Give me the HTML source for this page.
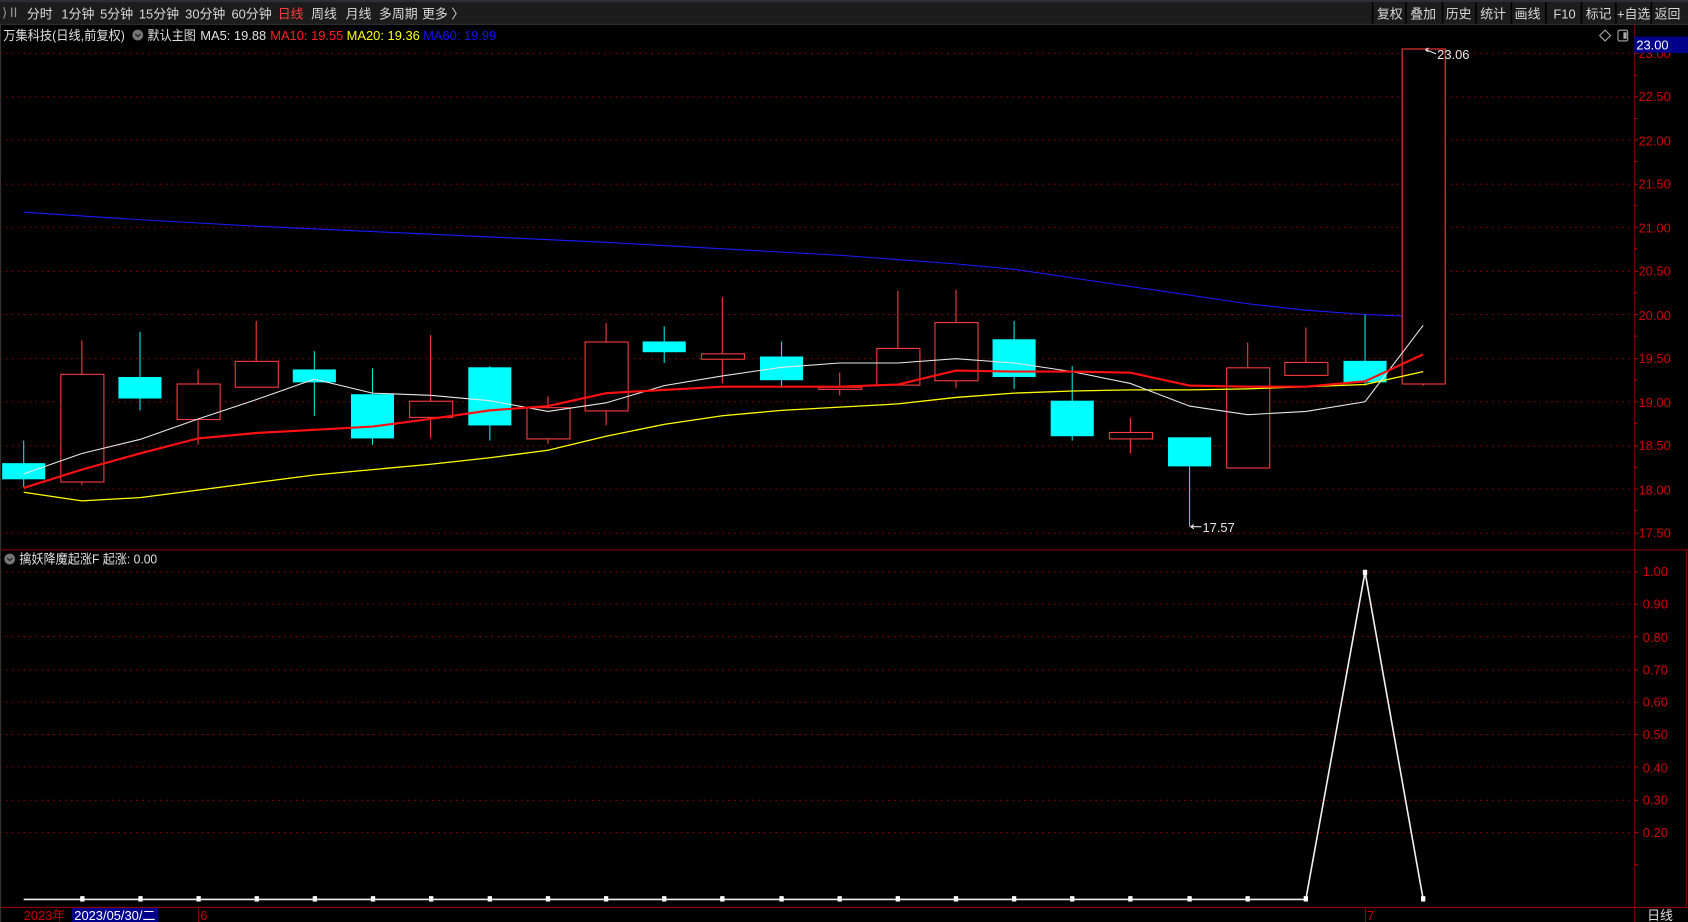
<!DOCTYPE html>
<html><head><meta charset="utf-8"><style>
html,body{margin:0;padding:0;background:#000;width:1688px;height:922px;overflow:hidden}
svg{display:block}
text{font-family:"Liberation Sans","Noto Sans CJK SC",sans-serif;font-size:12px}
</style></head><body>
<svg width="1688" height="922" viewBox="0 0 1568 856" preserveAspectRatio="none" xmlns="http://www.w3.org/2000/svg">
<rect width="1568" height="856" fill="#000"/>
<rect x="0" y="0" width="1568" height="22" fill="#1c1c1c"/>
<rect x="0" y="0" width="1568" height="2" fill="#2a2e36"/>
<line x1="0" y1="22.5" x2="1568" y2="22.5" stroke="#3a3a3a"/>
<g fill="#d8d8d8">
<text x="2" y="16" fill="#999" font-size="10">⟩Ⅱ</text>
<text x="25" y="17">分时</text><text x="57" y="17">1分钟</text><text x="93" y="17">5分钟</text>
<text x="129" y="17">15分钟</text><text x="172" y="17">30分钟</text><text x="215" y="17">60分钟</text>
<text x="258" y="17" fill="#ff3c3c">日线</text><text x="289" y="17">周线</text><text x="321" y="17">月线</text>
<text x="352" y="17">多周期</text><text x="392" y="17">更多 〉</text>
</g>
<g stroke="#000" stroke-width="1.5">
<line x1="1275" y1="2" x2="1275" y2="22"/><line x1="1306" y1="2" x2="1306" y2="22"/><line x1="1340" y1="2" x2="1340" y2="22"/>
<line x1="1371" y1="2" x2="1371" y2="22"/><line x1="1404" y1="2" x2="1404" y2="22"/><line x1="1436" y1="2" x2="1436" y2="22"/>
<line x1="1469" y1="2" x2="1469" y2="22"/><line x1="1501" y1="2" x2="1501" y2="22"/><line x1="1534" y1="2" x2="1534" y2="22"/>
</g>
<g fill="#d8d8d8">
<text x="1279" y="17">复权</text><text x="1310" y="17">叠加</text><text x="1343" y="17">历史</text><text x="1375" y="17">统计</text>
<text x="1407" y="17">画线</text><text x="1443" y="17">F10</text><text x="1473" y="17">标记</text><text x="1502" y="17">+自选</text><text x="1537" y="17">返回</text>
</g>
<text x="3" y="37" fill="#e0e0e0" textLength="113" lengthAdjust="spacingAndGlyphs">万集科技(日线,前复权)</text>
<circle cx="128" cy="32.5" r="5" fill="#777"/><path d="M125.5 31.5 L128 34 L130.5 31.5" stroke="#222" fill="none" stroke-width="1.2"/>
<text x="137" y="37" fill="#e0e0e0" textLength="45" lengthAdjust="spacingAndGlyphs">默认主图</text>
<text x="186" y="37" fill="#e0e0e0">MA5: 19.88</text>
<text x="251" y="37" fill="#ff2020">MA10: 19.55</text>
<text x="322" y="37" fill="#ffff00">MA20: 19.36</text>
<text x="393" y="37" fill="#1010ff">MA60: 19.99</text>
<path d="M1491 28 L1496 33 L1491 38 L1486 33 Z" stroke="#aaa" fill="none"/>
<rect x="1503" y="28" width="9" height="10" rx="1.5" stroke="#aaa" fill="none"/><rect x="1508" y="30" width="3" height="6" fill="#aaa"/>
<g stroke="#8a0000" stroke-dasharray="1.5,4" stroke-width="1">
<line x1="0" y1="49.5" x2="1518" y2="49.5"/><line x1="0" y1="90" x2="1518" y2="90"/><line x1="0" y1="130" x2="1518" y2="130"/>
<line x1="0" y1="171" x2="1518" y2="171"/><line x1="0" y1="211" x2="1518" y2="211"/><line x1="0" y1="252" x2="1518" y2="252"/>
<line x1="0" y1="292" x2="1518" y2="292"/><line x1="0" y1="333" x2="1518" y2="333"/><line x1="0" y1="373" x2="1518" y2="373"/>
<line x1="0" y1="414" x2="1518" y2="414"/><line x1="0" y1="454" x2="1518" y2="454"/><line x1="0" y1="495" x2="1518" y2="495"/>
<line x1="0" y1="531" x2="1518" y2="531"/><line x1="0" y1="561" x2="1518" y2="561"/><line x1="0" y1="591" x2="1518" y2="591"/>
<line x1="0" y1="622" x2="1518" y2="622"/><line x1="0" y1="652" x2="1518" y2="652"/><line x1="0" y1="682" x2="1518" y2="682"/>
<line x1="0" y1="712" x2="1518" y2="712"/><line x1="0" y1="743" x2="1518" y2="743"/><line x1="0" y1="773" x2="1518" y2="773"/>
</g>
<g stroke="#900000" stroke-width="1">
<line x1="1518.5" y1="23" x2="1518.5" y2="856"/>
<line x1="0" y1="510.5" x2="1568" y2="510.5"/>
<line x1="0" y1="842.5" x2="1568" y2="842.5"/>
<line x1="1566.5" y1="510" x2="1566.5" y2="842"/>
</g>
<line x1="0.5" y1="23" x2="0.5" y2="856" stroke="#333"/>
<g fill="#d00000" font-size="12">
<text x="1522" y="94">22.50</text><text x="1522" y="135">22.00</text><text x="1522" y="175">21.50</text>
<text x="1522" y="216">21.00</text><text x="1522" y="256">20.50</text><text x="1522" y="297">20.00</text>
<text x="1522" y="337">19.50</text><text x="1522" y="378">19.00</text><text x="1522" y="418">18.50</text>
<text x="1522" y="459">18.00</text><text x="1522" y="499">17.50</text>
<text x="1526" y="535">1.00</text><text x="1526" y="565">0.90</text><text x="1526" y="596">0.80</text>
<text x="1526" y="626">0.70</text><text x="1526" y="656">0.60</text><text x="1526" y="686">0.50</text>
<text x="1526" y="717">0.40</text><text x="1526" y="747">0.30</text><text x="1526" y="777">0.20</text>
</g>
<g stroke="#b00000">
<path d="M1518 49.5h4M1518 70h3M1518 90h4M1518 110h3M1518 130h4M1518 150h3M1518 171h4M1518 191h3M1518 211h4M1518 231h3M1518 252h4M1518 272h3M1518 292h4M1518 312h3M1518 333h4M1518 353h3M1518 373h4M1518 393h3M1518 414h4M1518 434h3M1518 454h4M1518 474h3M1518 495h4"/>
<path d="M1518 531h4M1518 561h4M1518 591h4M1518 622h4M1518 652h4M1518 682h4M1518 712h4M1518 743h4M1518 773h4M1518 803h4"/>
</g>
<text x="1522" y="54" fill="#d00000">23.00</text>
<rect x="1518" y="34" width="50" height="15" fill="#00008b"/>
<text x="1520" y="46" fill="#fff">23.00</text>
<polyline fill="none" stroke="#1a1aff" stroke-width="1" points="22,197 130,204 238,210 346,215 455,220 563,225 671,231 780,237 888,245 942,250 996,258 1050,266 1105,274 1159,282 1213,288 1268,292 1322,294"/>
<g stroke="#ff3c3c" fill="#000" stroke-width="1">
<line x1="76" y1="316" x2="76" y2="450"/><rect x="56.5" y="347.5" width="40" height="100"/>
<line x1="184" y1="343" x2="184" y2="413"/><rect x="164.5" y="356.5" width="40" height="33"/>
<line x1="238" y1="298" x2="238" y2="359"/><rect x="218.5" y="335.5" width="40" height="24"/>
<line x1="400" y1="311" x2="400" y2="407"/><rect x="380.5" y="372.5" width="40" height="15"/>
<line x1="509" y1="368" x2="509" y2="412"/><rect x="489.5" y="378.5" width="40" height="29"/>
<line x1="563" y1="300" x2="563" y2="395"/><rect x="543.5" y="317.5" width="40" height="64"/>
<line x1="671" y1="276" x2="671" y2="356"/><rect x="651.5" y="328.5" width="40" height="5"/>
<line x1="780" y1="346" x2="780" y2="367"/><rect x="760.5" y="359.5" width="40" height="2"/>
<line x1="834" y1="270" x2="834" y2="357"/><rect x="814.5" y="323.5" width="40" height="34"/>
<line x1="888" y1="269" x2="888" y2="360"/><rect x="868.5" y="299.5" width="40" height="54"/>
<line x1="1050" y1="388" x2="1050" y2="421"/><rect x="1030.5" y="401.5" width="40" height="6"/>
<line x1="1159" y1="318" x2="1159" y2="434"/><rect x="1139.5" y="341.5" width="40" height="93"/>
<line x1="1213" y1="304" x2="1213" y2="348"/><rect x="1193.5" y="336.5" width="40" height="12"/>
<line x1="1322" y1="45" x2="1322" y2="358"/><rect x="1302.5" y="45.5" width="40" height="311"/>
</g>
<g stroke="#00e8e8" fill="#00ffff" stroke-width="1">
<line x1="22" y1="409" x2="22" y2="452"/><rect x="2" y="430" width="40" height="15" stroke="none"/>
<line x1="130" y1="308" x2="130" y2="381"/><rect x="110" y="350" width="40" height="20" stroke="none"/>
<line x1="292" y1="326" x2="292" y2="386"/><rect x="272" y="343" width="40" height="12" stroke="none"/>
<line x1="346" y1="342" x2="346" y2="413"/><rect x="326" y="366" width="40" height="41" stroke="none"/>
<line x1="455" y1="340" x2="455" y2="409"/><rect x="435" y="341" width="40" height="54" stroke="none"/>
<line x1="617" y1="303" x2="617" y2="337"/><rect x="597" y="317" width="40" height="10" stroke="none"/>
<line x1="726" y1="317" x2="726" y2="360"/><rect x="706" y="331" width="40" height="22" stroke="none"/>
<line x1="942" y1="298" x2="942" y2="361"/><rect x="922" y="315" width="40" height="35" stroke="none"/>
<line x1="996" y1="340" x2="996" y2="409"/><rect x="976" y="372" width="40" height="33" stroke="none"/>
<line x1="1105" y1="406" x2="1105" y2="489"/><rect x="1085" y="406" width="40" height="27" stroke="none"/>
<line x1="1268" y1="292" x2="1268" y2="358"/><rect x="1248" y="335" width="40" height="20" stroke="none"/>
</g>
<polyline fill="none" stroke="#ffff00" stroke-width="1.2" points="22,457 76,465 130,462 184,455 238,448 292,441 346,436 400,431 455,425 509,418 563,405 617,394 671,386 726,381 780,378 834,375 888,369 942,365 996,363 1050,362 1105,362 1159,361 1213,359 1268,357 1322,345"/>
<polyline fill="none" stroke="#e8e8e8" stroke-width="1" points="22,440 76,421 130,408 184,389 238,371 292,352 346,365 400,367 455,372 509,382 563,374 617,358 671,349 726,341 780,337 834,337 888,333 942,337 996,345 1050,356 1105,377 1159,385 1213,382 1268,373 1322,302"/>
<polyline fill="none" stroke="#ff1010" stroke-width="2" points="22,453 76,436 130,421 184,407 238,402 292,399 346,396 400,389 455,381 509,377 563,365 617,362 671,359 726,359 780,359 834,357 888,344 942,345 996,345 1050,346 1105,358 1159,359 1213,359 1268,354 1322,329"/>
<text x="1335" y="55" fill="#e8e8e8">23.06</text>
<path d="M1324 46 L1334 50 M1324 46 l3 -1.5 M1324 46 l2.5 2" stroke="#e8e8e8" fill="none"/>
<text x="1117" y="494" fill="#e8e8e8">17.57</text>
<path d="M1106 489 H1116 M1106 489 l3 -2 M1106 489 l3 2" stroke="#e8e8e8" fill="none"/>
<circle cx="9" cy="519" r="5" fill="#777"/><path d="M6.5 518 L9 520.5 L11.5 518" stroke="#222" fill="none" stroke-width="1.2"/>
<text x="18" y="523" fill="#e0e0e0" textLength="128" lengthAdjust="spacingAndGlyphs">擒妖降魔起涨F 起涨: 0.00</text>
<polyline fill="none" stroke="#f0f0f0" stroke-width="1.5" points="22,835 1213,835 1268,531 1322,835"/>
<g fill="#fff">
<rect x="74.5" y="832" width="4" height="5"/><rect x="128.5" y="832" width="4" height="5"/><rect x="182.5" y="832" width="4" height="5"/>
<rect x="236.5" y="832" width="4" height="5"/><rect x="290.5" y="832" width="4" height="5"/><rect x="344.5" y="832" width="4" height="5"/>
<rect x="398.5" y="832" width="4" height="5"/><rect x="453" y="832" width="4" height="5"/><rect x="507" y="832" width="4" height="5"/>
<rect x="561" y="832" width="4" height="5"/><rect x="615" y="832" width="4" height="5"/><rect x="669" y="832" width="4" height="5"/>
<rect x="724" y="832" width="4" height="5"/><rect x="778" y="832" width="4" height="5"/><rect x="832" y="832" width="4" height="5"/>
<rect x="886" y="832" width="4" height="5"/><rect x="940" y="832" width="4" height="5"/><rect x="994" y="832" width="4" height="5"/>
<rect x="1048" y="832" width="4" height="5"/><rect x="1103" y="832" width="4" height="5"/><rect x="1157" y="832" width="4" height="5"/>
<rect x="1211" y="832" width="4" height="5"/><rect x="1266" y="529" width="4" height="5"/><rect x="1320" y="832" width="4" height="5"/>
</g>
<text x="22" y="854" fill="#c00000" font-size="11">2023年</text>
<rect x="67" y="843" width="80" height="13" fill="#00008b"/>
<text x="69" y="854" fill="#fff" font-size="11">2023/05/30/二</text>
<line x1="184.5" y1="843" x2="184.5" y2="856" stroke="#900000"/><text x="186" y="854" fill="#c00000" font-size="11">6</text>
<line x1="1268.5" y1="843" x2="1268.5" y2="856" stroke="#900000"/><text x="1270" y="854" fill="#c00000" font-size="11">7</text>
<text x="1530" y="854" fill="#e0e0e0" font-size="11">日线</text>
</svg>
</body></html>
